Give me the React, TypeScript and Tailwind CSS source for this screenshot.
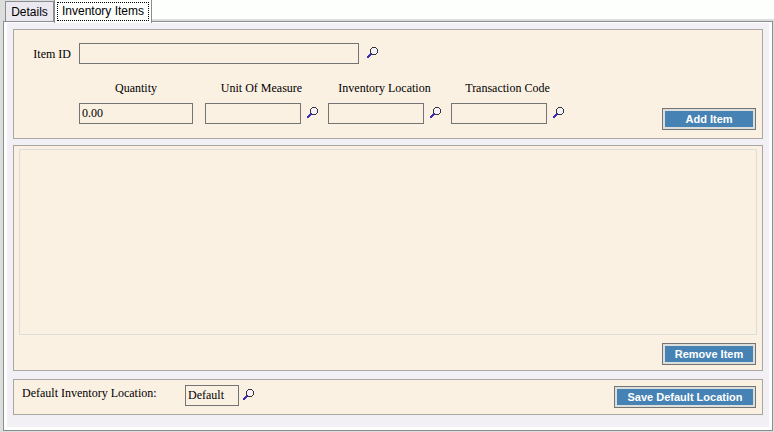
import type { ReactNode } from "react";

const boxClass = "h-[21px] border border-[#757475] bg-[#fbf1e3] px-0.5 text-xs text-black outline-none";

function Magnifier() {
    return (
        <svg width="11" height="11" viewBox="0 0 11 11" shapeRendering="crispEdges">
            <path d="M5 1h5v6H5z" fill="#f3f1fa" />
            <path d="M5 0h4v1H5zM4 1h1v1H4zM9 1h1v1H9zM3 2h1v4H3zM10 2h1v4h-1zM4 6h1v1H4zM9 6h1v1H9zM5 7h4v1H5z" fill="#35323f" />
            <path d="M3 6h1v1h1v1H4v1H3v1H2v1H0V9h1V8h1V7h1z" fill="#3c2fb8" />
        </svg>
    );
}

function Lookup({ label }: { label: string }) {
    return (
        <button type="button" aria-label={label} className="mt-1 flex w-[11px] shrink-0">
            <Magnifier />
        </button>
    );
}

function Group({ className, children }: { className: string; children: ReactNode }) {
    return <section className={`border border-[#a9a7a3] bg-[#fbf1e3] ${className}`}>{children}</section>;
}

function ActionButton({ className, children }: { className: string; children: string }) {
    return (
        <button type="button" className={`h-[22px] shrink-0 border border-[#757475] bg-[#dcdedb] p-0.5 ${className}`}>
            <span className="block h-4 bg-[#4682b4] text-center font-['Liberation_Sans',sans-serif] text-[11px] leading-4 font-bold text-white">
                {children}
            </span>
        </button>
    );
}

function LookupField({ id, label }: { id: string; label: string }) {
    return (
        <div>
            <label htmlFor={id} className="block text-center">{label}</label>
            <div className="mt-[7px] flex items-start gap-1.5">
                <input id={id} className={`${boxClass} w-24`} />
                <Lookup label={`Find ${label}`} />
            </div>
        </div>
    );
}

export default function App() {
    return (
        <div className="flex min-h-screen flex-col bg-[#dcdedb] pr-px pl-[3px] font-['Liberation_Serif',serif] text-xs leading-4 text-black">
            <div role="tablist" className="-mr-px flex h-[21px] items-start font-['Liberation_Sans',sans-serif]">
                <button type="button" role="tab" aria-selected="false" className="mt-px ml-0.5 h-5 w-[49px] border border-b-0 border-[#8a8d93] bg-[#ebe8f0] text-xs">
                    Details
                </button>
                <button type="button" role="tab" aria-selected="true" className="relative z-10 h-[23px] w-[98px] border-x border-[#8a8d93] bg-[#fcfffc] px-0.5 text-xs">
                    <span className="-mt-px block h-[19px] border border-dotted border-black leading-4">Inventory Items</span>
                </button>
                <div className="h-[19px] grow bg-[#fcfffc]"></div>
            </div>
            <main className="mb-px flex grow flex-col border border-[#8a8d93] bg-[#fcfffc] px-[3px] pt-px pb-[3px]">
                <div className="grow bg-[#f2f0f5] px-1.5 pt-1.5 pb-3">
                    <Group className="pt-[13px] pr-1.5 pb-2">
                        <div className="flex items-start">
                            <label htmlFor="item-id" className="mt-[3px] w-[65px] pr-2 text-right">Item ID</label>
                            <input id="item-id" className={`${boxClass} mr-2 w-[280px]`} />
                            <Lookup label="Find item" />
                        </div>
                        <div className="mt-4 flex items-end pl-[65px]">
                            <div className="mr-3 mb-1.5">
                                <label htmlFor="quantity" className="block text-center">Quantity</label>
                                <input id="quantity" defaultValue="0.00" className={`${boxClass} mt-[7px] block w-[114px]`} />
                            </div>
                            <div className="mb-1.5 flex gap-2.5">
                                <LookupField id="unit" label="Unit Of Measure" />
                                <LookupField id="location" label="Inventory Location" />
                                <LookupField id="code" label="Transaction Code" />
                            </div>
                            <ActionButton className="ml-auto w-[94px]">Add Item</ActionButton>
                        </div>
                    </Group>
                    <Group className="mt-1.5 px-[5px] pt-[3px] pb-[5px]">
                        <div className="h-[186px] border border-[#dcdedb]"></div>
                        <div className="mt-2 flex justify-end pr-px">
                            <ActionButton className="w-[94px]">Remove Item</ActionButton>
                        </div>
                    </Group>
                    <Group className="mt-2 flex items-start pt-[5px] pr-1.5 pb-1.5 pl-2">
                        <label htmlFor="default-location" className="w-[163px]">Default Inventory Location:</label>
                        <input id="default-location" defaultValue="Default" className={`${boxClass} mr-1 w-[54px]`} />
                        <Lookup label="Find default location" />
                        <ActionButton className="mt-px ml-auto w-[142px]">Save Default Location</ActionButton>
                    </Group>
                </div>
            </main>
        </div>
    );
}
